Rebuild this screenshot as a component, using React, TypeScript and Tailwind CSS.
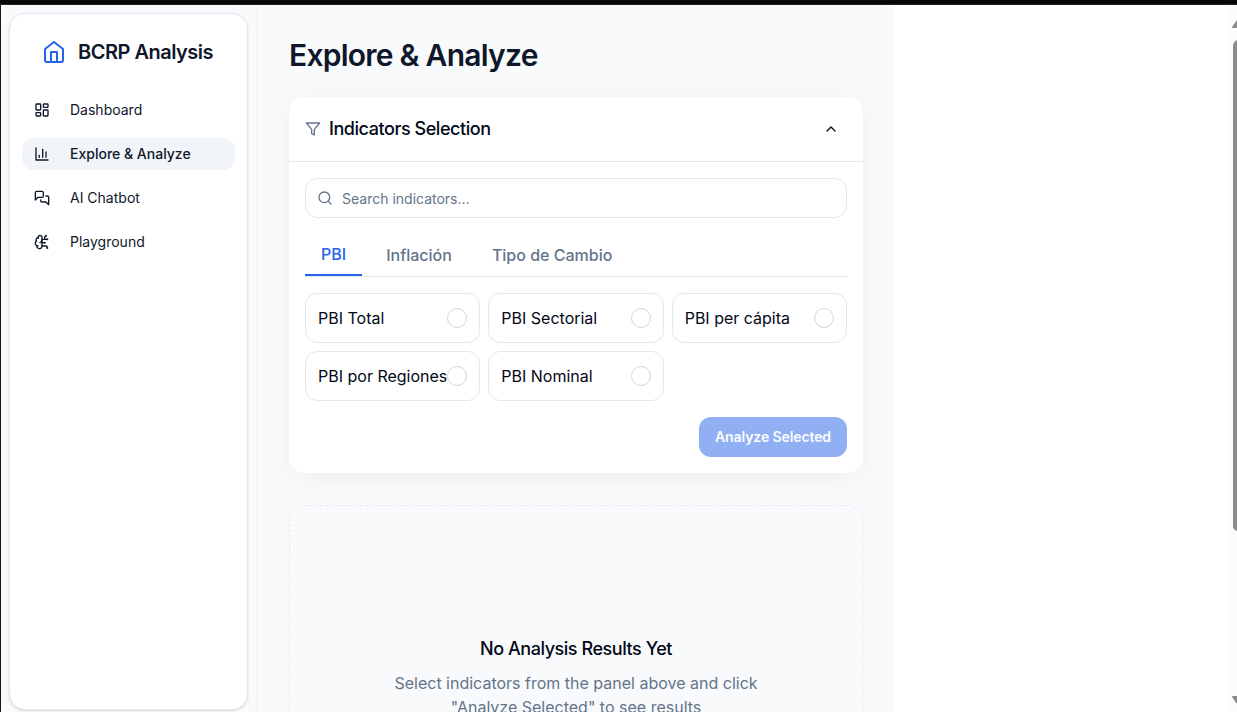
import React from "react";
import { BrainCircuit, ChevronUp, LayoutDashboard, Search } from "lucide-react";

const indicators = ["PBI Total", "PBI Sectorial", "PBI per cápita", "PBI por Regiones", "PBI Nominal"];

function HomeIcon() {
  return (
    <svg className="size-6 shrink-0 text-[#2563eb]" viewBox="0 0 24 24" fill="none" stroke="currentColor" strokeWidth="2" strokeLinecap="round" strokeLinejoin="round">
      <path d="m3 9 9-7 9 7v11a2 2 0 0 1-2 2H5a2 2 0 0 1-2-2z" />
      <polyline points="9 22 9 12 15 12 15 22" />
    </svg>
  );
}

function ChartIcon() {
  return (
    <svg className="size-4" viewBox="0 0 24 24" fill="none" stroke="currentColor" strokeWidth="2" strokeLinecap="round" strokeLinejoin="round">
      <path d="M3 3v18h18" />
      <path d="M18 17V9" />
      <path d="M13 17V5" />
      <path d="M8 17v-3" />
    </svg>
  );
}

function ChatIcon() {
  return (
    <svg className="size-4" viewBox="0 0 24 24" fill="none" stroke="currentColor" strokeWidth="2" strokeLinecap="round" strokeLinejoin="round">
      <path d="M14 9a2 2 0 0 1-2 2H6l-4 4V4a2 2 0 0 1 2-2h8a2 2 0 0 1 2 2z" />
      <path d="M18 9h2a2 2 0 0 1 2 2v11l-4-4h-6a2 2 0 0 1-2-2v-1" />
    </svg>
  );
}

function FilterIcon() {
  return (
    <svg className="size-4 text-[#64748b]" viewBox="0 0 24 24" fill="none" stroke="currentColor" strokeWidth="2" strokeLinecap="round" strokeLinejoin="round">
      <polygon points="22 3 2 3 10 12.46 10 19 14 21 14 12.46 22 3" />
    </svg>
  );
}

function NavItem({ icon, label, active }: { icon: React.ReactNode; label: string; active?: boolean }) {
  return (
    <a className={active ? "flex h-8 items-center rounded-xl bg-slate-100 pl-3 text-sm font-medium text-[#0f172a]" : "flex h-8 items-center rounded-xl pl-3 text-sm text-[#0f172a]"}>
      <span className="flex w-9 items-center">{icon}</span>
      {label}
    </a>
  );
}

export default function App() {
  return (
    <div className="flex h-[712px] w-full flex-col overflow-hidden bg-white font-['Inter',sans-serif] text-[#020817]">
      <div className="h-[5px] shrink-0 border-b border-[#222] bg-[#080808]" />
      <div className="flex min-h-0 flex-1 border-l border-[#18181b]">
        <div className="w-64 shrink-0 border-r border-slate-100 bg-[#f9fafc] p-2 pb-[2px]">
          <aside className="h-full rounded-2xl border border-slate-200 bg-white px-3 pt-[26px] shadow-sm">
            <div className="flex h-6 items-center gap-3 pl-5">
              <HomeIcon />
              <span className="text-xl font-semibold tracking-tight whitespace-nowrap text-[#0f172a]">BCRP Analysis</span>
            </div>
            <nav className="mt-[30px] flex flex-col gap-3">
              <NavItem icon={<LayoutDashboard size={16} />} label="Dashboard" />
              <NavItem icon={<ChartIcon />} label="Explore & Analyze" active />
              <NavItem icon={<ChatIcon />} label="AI Chatbot" />
              <NavItem icon={<BrainCircuit size={16} />} label="Playground" />
            </nav>
          </aside>
        </div>

        <main className="w-[638px] shrink-0 bg-[#f9fafc] px-8 pt-8">
          <h1 className="text-3xl leading-9 font-semibold tracking-tight text-[#0f172a]">Explore &amp; Analyze</h1>

          <section className="mt-6 h-[376px] rounded-2xl bg-white shadow-[0_4px_24px_rgba(0,0,0,0.05)]">
            <header className="flex h-[65px] items-center justify-between border-b border-slate-200 px-4">
              <div className="flex items-center gap-2">
                <FilterIcon />
                <h2 className="text-lg font-medium tracking-tight">Indicators Selection</h2>
              </div>
              <ChevronUp size={16} className="mr-2" />
            </header>
            <div className="p-4">
              <div className="flex h-10 items-center gap-[9px] rounded-xl border border-slate-200 px-[11px] text-sm text-[#64748b]">
                <Search size={16} />
                <span className="pt-0.5">Search indicators...</span>
              </div>
              <div className="mt-4 flex h-[43px] gap-2 border-b border-slate-200 font-medium text-[#64748b]">
                <div className="flex h-[42px] items-center border-b-2 border-[#2563eb] px-4 text-[#2563eb]">PBI</div>
                <div className="flex h-[42px] items-center px-4">Inflación</div>
                <div className="flex h-[42px] items-center px-4">Tipo de Cambio</div>
              </div>
              <div className="mt-4 grid grid-cols-3 gap-2">
                {indicators.map((name) => (
                  <div key={name} className="flex h-[50px] items-center justify-between rounded-xl border border-slate-200 px-3">
                    <span className="whitespace-nowrap">{name}</span>
                    <span className="size-5 shrink-0 rounded-full border border-gray-300" />
                  </div>
                ))}
              </div>
              <div className="mt-4 flex justify-end">
                <button className="h-10 w-[148px] rounded-xl bg-[#2563eb] text-sm font-semibold tracking-[-0.1px] whitespace-nowrap text-[#f8fafc] opacity-50">Analyze Selected</button>
              </div>
            </div>
          </section>

          <section className="mt-8 h-[330px] rounded-2xl border border-dashed border-slate-200 pt-[129px] text-center">
            <h3 className="text-lg font-medium tracking-tight">No Analysis Results Yet</h3>
            <p className="mx-auto mt-2 w-96 text-[#64748b]">Select indicators from the panel above and click "Analyze Selected" to see results</p>
          </section>
        </main>

        <div className="flex-1 bg-white" />
        <div className="flex w-[9px] shrink-0 justify-end overflow-hidden bg-[#fcfcfc]">
          <svg width="5" height="707" viewBox="0 0 5 707" fill="#8b8b8b">
            <path d="M5 15 L0 22 Q0 23 1 23 H5Z" />
            <path d="M5 35 Q1 37 1 41 V521 Q1 525 5 526Z" />
            <path d="M5 699 L0 692 Q0 691 1 691 H5Z" />
          </svg>
        </div>
      </div>
    </div>
  );
}
